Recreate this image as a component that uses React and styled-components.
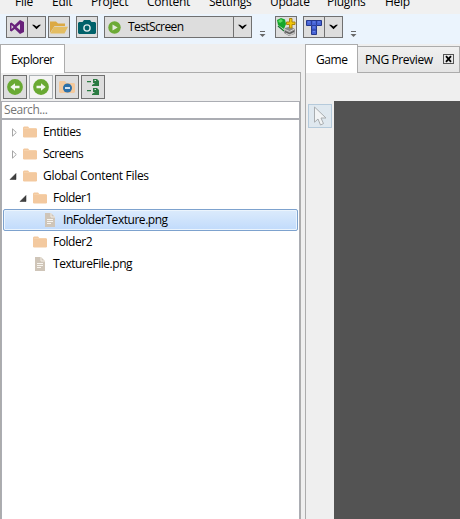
import React from "react";
import styled, { createGlobalStyle } from "styled-components";

const GlobalStyle = createGlobalStyle`
  * { box-sizing: border-box; }
  body { margin: 0; overflow: hidden; }
`;

const Window = styled.div`
  width: 460px;
  height: 519px;
  overflow: hidden;
  display: flex;
  flex-direction: column;
  background: #efefef;
  color: #000;
  font: 12px/16px "Open Sans", "Noto Sans", sans-serif;
`;

const Label = styled.span`
  white-space: nowrap;
  letter-spacing: ${(p) => p.$track ?? -0.25}px;
`;

const MenuBar = styled.nav`
  height: 14px;
  flex: none;
  display: grid;
  grid-template-rows: 14px;
  grid-template-columns: 37px 39px 56px 62px 61px 57px 58px 60px;
  align-items: end;
  padding-left: 15px;
  background: #f0f0f0;
`;

const MenuItem = styled.div`
  height: 20px;
  line-height: 16px;
`;

const Toolbar = styled.header`
  height: 30px;
  flex: none;
  display: flex;
  align-items: flex-start;
  padding: 2px 0 0 6px;
  background: #ebf4fd;
`;

const ToolButton = styled.div`
  height: 22px;
  width: ${(p) => p.$width}px;
  margin-right: ${(p) => p.$gap ?? 0}px;
  flex: none;
  display: flex;
  align-items: center;
  border: 1px solid #707070;
  background: #ddd;
  svg { flex: none; }
`;

const Face = styled.div`
  flex: 1;
  display: flex;
  align-items: center;
  justify-content: ${(p) => (p.$text ? "flex-start" : "center")};
  gap: 7px;
  padding-left: ${(p) => (p.$text ? 3 : 0)}px;
`;

const DropArrow = styled.div`
  width: 18px;
  height: 20px;
  flex: none;
  display: flex;
  align-items: center;
  justify-content: center;
  border-left: 1px solid #707070;
`;

const Overflow = styled.div`
  width: 8px;
  flex: none;
  margin: 15px ${(p) => p.$gap}px 0 0;
  line-height: 0;
`;

const Workspace = styled.main`
  flex: 1;
  display: grid;
  grid-template-columns: 301px 155px;
  column-gap: 4px;
`;

const Pane = styled.section`
  display: flex;
  flex-direction: column;
  min-width: 0;
`;

const TabStrip = styled.div`
  height: 29px;
  flex: none;
  display: flex;
  align-items: flex-end;
`;

const Tab = styled.div`
  width: ${(p) => p.$width}px;
  height: ${(p) => (p.$active ? 29 : 27)}px;
  flex: none;
  display: flex;
  align-items: center;
  justify-content: space-between;
  padding: ${(p) => (p.$active ? "1px 10px 0" : "1px 5px 0 7px")};
  border: 1px solid #acacac;
  border-left-width: ${(p) => (p.$active ? 1 : 0)}px;
  border-bottom-width: ${(p) => (p.$active ? 0 : 1)}px;
  background: ${(p) => (p.$active ? "#fff" : "linear-gradient(#f0f0f0, #e5e5e5)")};
`;

const StripLine = styled.div`
  flex: 1;
  border-bottom: 1px solid #acacac;
`;

const ExplorerBody = styled.div`
  flex: 1;
  display: flex;
  flex-direction: column;
  border: 1px solid #acacac;
  border-width: 0 1px;
`;

const ExplorerTools = styled.div`
  height: 28px;
  flex: none;
  display: flex;
  gap: 2px;
  padding: 2px 0 0 2px;
`;

const SquareButton = styled.div`
  width: 24px;
  height: 24px;
  display: flex;
  align-items: center;
  justify-content: center;
  border: 1px solid ${(p) => (p.$light ? "#adb2b5" : "#707070")};
  background: ${(p) => (p.$light ? "#f4f4f4" : "#ddd")};
`;

const Search = styled.div`
  height: 18px;
  flex: none;
  padding-left: 2px;
  border: 1px solid #abadb3;
  color: #757575;
  background: #fff;
  line-height: 15px;
`;

const Tree = styled.div`
  flex: 1;
  padding: 1px 1px 0 1px;
  border: 1px solid #abadb3;
  border-bottom: 0;
  background: #fff;
`;

const TreeRow = styled.div`
  height: 22px;
  display: grid;
  grid-template-columns: 9px 14px 1fr;
  column-gap: 6px;
  align-items: center;
  padding-left: ${(p) => 4 + p.$level * 10}px;
  border: 1px solid ${(p) => (p.$selected ? "#7da2ce" : "transparent")};
  border-radius: 2px;
  background: ${(p) => (p.$selected ? "linear-gradient(#dcebfc, #c1dbfc)" : "transparent")};
  box-shadow: ${(p) => (p.$selected ? "inset 0 0 0 1px #ebf4fd" : "none")};
  svg { display: block; }
`;

const GameBody = styled.div`
  flex: 1;
  display: flex;
  padding-top: 28px;
  border-left: 1px solid #acacac;
`;

const ToolColumn = styled.div`
  width: 28px;
  flex: none;
  padding: 3px 0 0 2px;
`;

const CursorButton = styled.div`
  width: 24px;
  height: 24px;
  border: 1px solid #b5cadb;
  background: #dfe8ef;
  svg { display: block; }
`;

const Viewport = styled.div`
  flex: 1;
  background: #535353;
`;

const CloseBox = styled.div`
  width: 11px;
  height: 10px;
  margin-bottom: 2px;
  border: 1px solid #555;
  background: #e9e9e9;
  svg { display: block; }
`;

const Caret = () => (
  <svg width="9" height="6" viewBox="0 0 9 6"><path d="M0 .8H2L4.5 2.6 7 .8H9L4.5 5.3Z" fill="#000" /></svg>
);
const OverflowIcon = () => (
  <svg width="7" height="7" viewBox="0 0 7 7"><path d="M1 .5H6" stroke="#686868" /><path d="M.5 3H6.5L3.5 6Z" fill="#686868" /></svg>
);
const StudioIcon = () => (
  <svg width="16" height="16" viewBox="0 0 16 16">
    <path fillRule="evenodd" fill="#68217a" d="M11 1 15 3V13L11 15 5.7 10 2.5 12.5 1 11.8V4.2L2.5 3.5 5.7 6ZM11 5 7.5 8 11 11ZM2.5 6V10L4.5 8Z" />
  </svg>
);
const OpenFolder = () => (
  <svg width="20" height="18" viewBox="0 0 20 18"><path d="M1 15V3.5H7L9 5.5H16V8H5.5Z" fill="#dca943" /><path d="M5 8.7H19L15.5 15.5H1.3Z" fill="#e4bd62" /></svg>
);
const Camera = () => (
  <svg width="20" height="18" viewBox="0 0 20 18"><path d="M2 4H5.5L7 2H13L14.5 4H18L19 5V15L18 16H2L1 15V5Z" fill="#00616a" /><circle cx="10" cy="10" r="3.8" fill="#dceaea" /><circle cx="10" cy="10" r="2.4" fill="#00616a" /></svg>
);
const PlayIcon = () => (
  <svg width="13" height="13" viewBox="0 0 13 13"><circle cx="6.5" cy="6.5" r="6.2" fill="#6caa36" /><path d="M4.5 3.4V9.6L9.7 6.5Z" fill="#e3eadc" /></svg>
);
const AddGemIcon = () => (
  <svg width="20" height="20" viewBox="0 0 20 20">
    <path d="M1 3 5 1 9 2.5 10 7 8 12 2 8Z" fill="#16a62c" /><path d="M2 4 5 2 7 4 4 6Z" fill="#5adc60" /><path d="M2 9 8 14" stroke="#167730" strokeWidth="1.3" />
    <path d="M9 11 14 9.5 19 12 18.5 17 13 19 8 16Z" fill="#898989" /><path d="M9 12.5 13.5 14.5 18.5 12M10 16.5 14 18 18 16" stroke="#d3d3d3" fill="none" /><path d="M9 14.5 13.5 16.5 18.5 14" stroke="#555" fill="none" />
    <path d="M13.5 1.5H16V5H19V7.5H16V11H13.5V7.5H10.5V5H13.5Z" fill="#efc50b" stroke="#aa8511" />
  </svg>
);
const TetrisIcon = () => (
  <svg width="16" height="15" viewBox="0 0 16 15"><path d="M.5.5H15.5V5.5H10.5V14.5H5.5V5.5H.5Z" fill="#4663d5" stroke="#25388c" /><path d="M5.5 1V5M10.5 1V5M6 5.5H10M6 10H10" stroke="#293f9c" /><path d="M2 2H4M7 2H9M12 2H14M7 7H9M7 11.5H9" stroke="#6886ed" /></svg>
);
const ArrowIcon = ({ back }) => (
  <svg width="16" height="16" viewBox="0 0 16 16">
    <circle cx="8" cy="8" r="7.9" fill="#69a933" />
    <path d={back ? "M12.5 6.8H8V4.2L3.3 8 8 11.8V9.2H12.5Z" : "M3.5 6.8H8V4.2L12.7 8 8 11.8V9.2H3.5Z"} fill="#f2f6ed" />
  </svg>
);
const FolderIcon = () => (
  <svg width="14" height="12" viewBox="0 0 14 12"><path d="M0 1.5 1 .5H5L6.3 2H13L14 3V11L13 11.5H1L0 11Z" fill="#f3c99f" /><path d="M1 2.5H13" stroke="#f8d8b6" strokeWidth=".6" /></svg>
);
const CollapseIcon = () => (
  <svg width="16" height="14" viewBox="0 0 16 14"><path d="M0 2 1 1H6L7.5 3H15L16 4V12L15 13H1L0 12Z" fill="#f4c99c" /><circle cx="8.5" cy="8" r="4.5" fill="#2d70a8" /><path d="M6 8H11" stroke="#fff" strokeWidth="1.6" /></svg>
);
const BookmarkTreeIcon = () => (
  <svg width="14" height="18" viewBox="0 0 14 18"><g fill="#2b7b42">
    <path d="M1 3H5V4.3H1ZM1 12H5V13.3H1Z" />
    <path fillRule="evenodd" d="M7 1H11L13 3V8H6V7L9 5H7ZM8.5 2V3H10V2ZM7 10H11L13 12V17H6V16L9 14H7ZM8.5 11V12H10V11Z" />
  </g></svg>
);
const FileIcon = () => (
  <svg width="14" height="14" viewBox="0 0 14 14"><path d="M2 0H8L12 4V14H2Z" fill="#cfc5b8" /><path d="M8 0V4H12" stroke="#f4eee5" fill="none" /><path d="M4 6.5H10M4 8.5H10M4 10.5H8" stroke="#f8f5ef" /></svg>
);
const Expander = ({ open }) => (
  <svg width="9" height="9" viewBox="0 0 9 9">
    {open ? <path d="M8 1.5V7.5H2Z" fill="#404040" stroke="#262626" strokeWidth=".5" /> : <path d="M4.5.8V8.2L8.3 4.5Z" fill="#fff" stroke="#a5a5a5" />}
  </svg>
);
const CursorIcon = () => (
  <svg width="22" height="22" viewBox="0 0 22 22"><path d="M5.5 2V17.2L9 14 11.5 20 14.5 18.6 12 13H17Z" fill="#f2f4f5" stroke="#a9adb0" /></svg>
);
const CloseIcon = () => (
  <svg width="9" height="8" viewBox="0 0 9 8"><path d="M2 1.2 7 6.8M7 1.2 2 6.8" stroke="#000" strokeWidth="1.8" /></svg>
);

const menus = ["File", "Edit", "Project", "Content", "Settings", "Update", "Plugins", "Help"];

const nodes = [
  { name: "Entities", level: 0, state: "closed", track: -0.4 },
  { name: "Screens", level: 0, state: "closed", track: -0.5 },
  { name: "Global Content Files", level: 0, state: "open", track: -0.3 },
  { name: "Folder1", level: 1, state: "open", track: -0.5 },
  { name: "InFolderTexture.png", level: 2, file: true, selected: true, track: -0.46 },
  { name: "Folder2", level: 1, track: -0.45 },
  { name: "TextureFile.png", level: 1, file: true, track: -0.48 },
];

export default function App() {
  return (
    <Window>
      <GlobalStyle />
      <MenuBar>{menus.map((name) => <MenuItem key={name}><Label>{name}</Label></MenuItem>)}</MenuBar>
      <Toolbar>
        <ToolButton $width={40} $gap={2}><Face><StudioIcon /></Face><DropArrow><Caret /></DropArrow></ToolButton>
        <ToolButton $width={22} $gap={6}><OpenFolder /></ToolButton>
        <ToolButton $width={22} $gap={6}><Camera /></ToolButton>
        <ToolButton $width={148} $gap={7}>
          <Face $text><PlayIcon /><Label $track={-0.6}>TestScreen</Label></Face><DropArrow><Caret /></DropArrow>
        </ToolButton>
        <Overflow $gap={8}><OverflowIcon /></Overflow>
        <ToolButton $width={22} $gap={6}><AddGemIcon /></ToolButton>
        <ToolButton $width={40} $gap={7}><Face><TetrisIcon /></Face><DropArrow><Caret /></DropArrow></ToolButton>
        <Overflow $gap={0}><OverflowIcon /></Overflow>
      </Toolbar>
      <Workspace>
        <Pane>
          <TabStrip><Tab $active $width={65}><Label $track={-0.55}>Explorer</Label></Tab><StripLine /></TabStrip>
          <ExplorerBody>
            <ExplorerTools>
              <SquareButton><ArrowIcon back /></SquareButton>
              <SquareButton $light><ArrowIcon /></SquareButton>
              <SquareButton><CollapseIcon /></SquareButton>
              <SquareButton><BookmarkTreeIcon /></SquareButton>
            </ExplorerTools>
            <Search><Label $track={-0.45}>Search...</Label></Search>
            <Tree>
              {nodes.map((node) => (
                <TreeRow key={node.name} $level={node.level} $selected={node.selected}>
                  <span>{node.state && <Expander open={node.state === "open"} />}</span>
                  {node.file ? <FileIcon /> : <FolderIcon />}
                  <Label $track={node.track}>{node.name}</Label>
                </TreeRow>
              ))}
            </Tree>
          </ExplorerBody>
        </Pane>
        <Pane>
          <TabStrip>
            <Tab $active $width={53}><Label $track={-0.4}>Game</Label></Tab>
            <Tab $width={102}><Label $track={-0.4}>PNG Preview</Label><CloseBox><CloseIcon /></CloseBox></Tab>
          </TabStrip>
          <GameBody>
            <ToolColumn><CursorButton><CursorIcon /></CursorButton></ToolColumn>
            <Viewport />
          </GameBody>
        </Pane>
      </Workspace>
    </Window>
  );
}
